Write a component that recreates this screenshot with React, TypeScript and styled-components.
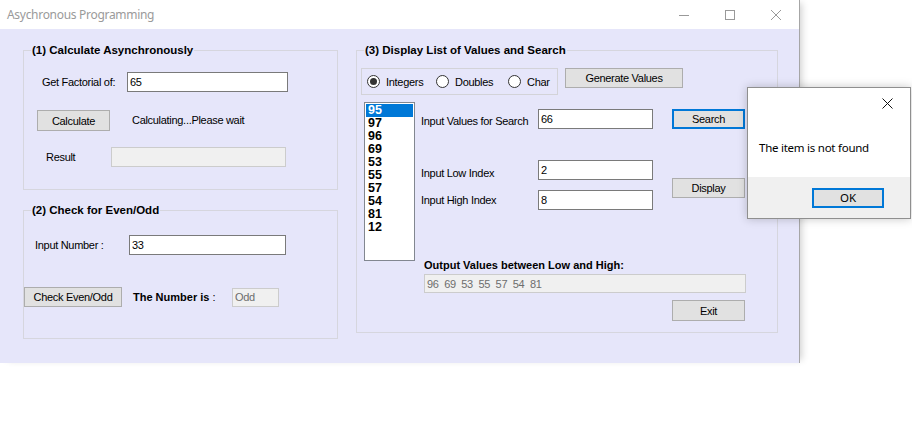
import React from "react";
import styled, { createGlobalStyle } from "styled-components";

const GlobalStyle = createGlobalStyle`
  html, body { margin: 0; padding: 0; background: #ffffff; }
  body { font-family: "Liberation Sans", Arial, sans-serif; }
  * { box-sizing: border-box; }
`;

const Page = styled.div`
  position: relative;
  width: 912px;
  height: 437px;
  overflow: hidden;
  background: #ffffff;
`;

const Window = styled.div`
  width: 800px;
  height: 363px;
  display: flex;
  flex-direction: column;
  border-right: 1px solid #a6a6a6;
  box-shadow: 5px 0 7px -3px rgba(0, 0, 0, 0.18);
`;

const TitleBar = styled.div`
  height: 29px;
  flex: none;
  display: flex;
  align-items: center;
  background: #ffffff;
`;

const TitleText = styled.div`
  flex: 1;
  padding-left: 7px;
  font-family: "Noto Sans", "Open Sans", sans-serif;
  font-size: 12px;
  letter-spacing: -0.3px;
  color: #9a9a9a;
`;

const CaptionButton = styled.div`
  width: 46px;
  height: 29px;
  flex: none;
  display: flex;
  align-items: center;
  justify-content: center;
`;

const Client = styled.div`
  flex: 1;
  background: #e6e6fa;
  display: flex;
  align-items: flex-start;
  gap: 18px;
  padding: 15px 0 0 23px;
`;

const LeftColumn = styled.div`
  display: flex;
  flex-direction: column;
  gap: 14px;
  width: 315px;
`;

const GroupBox = styled.fieldset<{ $w: number; $h: number }>`
  margin: 0;
  padding: 0;
  min-width: 0;
  width: ${(p) => p.$w}px;
  height: ${(p) => p.$h}px;
  border: 1px solid #d6d6de;
`;

const Legend = styled.legend`
  margin-left: 7px;
  padding: 0 1px;
  font-size: 11.5px;
  font-weight: bold;
  line-height: 13px;
  color: #000000;
`;

const Row = styled.div<{ $mt: number; $pl?: number; $top?: boolean }>`
  display: flex;
  align-items: ${(p) => (p.$top ? "flex-start" : "center")};
  margin-top: ${(p) => p.$mt}px;
  padding-left: ${(p) => p.$pl ?? 0}px;
`;

const Label = styled.span<{ $w?: number; $ml?: number; $bold?: boolean; $drop?: number }>`
  flex: none;
  width: ${(p) => (p.$w ? `${p.$w}px` : "auto")};
  margin-left: ${(p) => p.$ml ?? 0}px;
  padding-top: ${(p) => (p.$drop ?? 0) * 2}px;
  font-size: 11px;
  letter-spacing: ${(p) => (p.$bold ? "0" : "-0.3px")};
  font-weight: ${(p) => (p.$bold ? "bold" : "normal")};
  line-height: 13px;
  color: #000000;
  white-space: nowrap;
`;

const Regular = styled.span`
  font-weight: normal;
`;

const TextBox = styled.input<{ $w: number; $h?: number; $ml?: number }>`
  flex: none;
  width: ${(p) => p.$w}px;
  height: ${(p) => p.$h ?? 20}px;
  margin: 0 0 0 ${(p) => p.$ml ?? 0}px;
  padding: 0 2px;
  border: 1px solid #7a7a7a;
  background: #ffffff;
  font-family: "Liberation Sans", Arial, sans-serif;
  font-size: 11px;
  letter-spacing: -0.3px;
  color: #000000;
  outline: none;
  border-radius: 0;

  &:disabled {
    background: #f0f0f0;
    border-color: #cccccc;
    color: #6d6d6d;
    -webkit-text-fill-color: #6d6d6d;
    opacity: 1;
  }
`;

const WinButton = styled.button<{
  $w: number;
  $h?: number;
  $ml?: number;
  $mt?: number;
  $focused?: boolean;
}>`
  flex: none;
  width: ${(p) => p.$w}px;
  height: ${(p) => p.$h ?? 20}px;
  margin: ${(p) => p.$mt ?? 0}px 0 0 ${(p) => p.$ml ?? 0}px;
  padding: 0;
  background: #e1e1e1;
  border: ${(p) => (p.$focused ? "2px solid #0078d7" : "1px solid #adadad")};
  border-radius: 0;
  font-family: "Liberation Sans", Arial, sans-serif;
  font-size: 11px;
  letter-spacing: -0.3px;
  color: #000000;
`;

const RadioPanel = styled.div`
  flex: none;
  width: 197px;
  height: 27px;
  border: 1px solid #d3d3d8;
  display: flex;
  align-items: center;
  padding-left: 5px;
`;

const RadioOption = styled.label<{ $w?: number }>`
  flex: none;
  width: ${(p) => (p.$w ? `${p.$w}px` : "auto")};
  display: flex;
  align-items: center;
  gap: 6px;
  font-size: 11px;
  letter-spacing: -0.3px;
  color: #000000;
`;

const RadioCircle = styled.span<{ $checked?: boolean }>`
  width: 13px;
  height: 13px;
  border-radius: 50%;
  border: 1px solid #333333;
  background: #ffffff;
  display: flex;
  align-items: center;
  justify-content: center;

  &::after {
    content: "";
    width: 7px;
    height: 7px;
    border-radius: 50%;
    background: ${(p) => (p.$checked ? "#333333" : "transparent")};
  }
`;

const ListArea = styled.div`
  display: flex;
  align-items: flex-start;
  margin-top: 7px;
  padding-left: 7px;
`;

const ListBox = styled.div`
  flex: none;
  width: 51px;
  height: 159px;
  background: #ffffff;
  border: 1px solid #828790;
  padding: 1px;
`;

const ListItem = styled.div<{ $selected?: boolean }>`
  height: 13px;
  line-height: 13px;
  padding-left: 2px;
  font-size: 12.5px;
  font-weight: bold;
  background: ${(p) => (p.$selected ? "#0078d7" : "transparent")};
  color: ${(p) => (p.$selected ? "#ffffff" : "#000000")};
`;

const RightArea = styled.div`
  display: flex;
  flex-direction: column;
  align-items: flex-start;
  margin-left: 6px;
`;

const UpperBlock = styled.div`
  display: flex;
  align-items: flex-start;
`;

const FieldsColumn = styled.div`
  display: flex;
  flex-direction: column;
`;

const ButtonsColumn = styled.div`
  display: flex;
  flex-direction: column;
  margin-left: 19px;
`;

const MessageBox = styled.div`
  position: absolute;
  left: 747px;
  top: 87px;
  width: 164px;
  height: 132px;
  background: #ffffff;
  border: 1px solid #8f8f8f;
  box-shadow: 0 0 9px rgba(0, 0, 0, 0.22);
  display: flex;
  flex-direction: column;
  font-family: "Noto Sans", "Open Sans", sans-serif;
`;

const MsgHeader = styled.div`
  height: 30px;
  flex: none;
  display: flex;
  justify-content: flex-end;
`;

const MsgClose = styled.div`
  width: 46px;
  height: 30px;
  display: flex;
  align-items: center;
  justify-content: center;
`;

const MsgBody = styled.div`
  flex: 1;
  display: flex;
  align-items: center;
  padding-left: 11px;
  font-size: 11.5px;
  letter-spacing: -0.25px;
  color: #000000;
`;

const MsgFooter = styled.div`
  height: 41px;
  flex: none;
  background: #f0f0f0;
  display: flex;
  align-items: center;
  justify-content: flex-end;
  padding-right: 26px;
`;

const MsgButton = styled.button`
  width: 72px;
  height: 20px;
  padding: 0;
  background: #e1e1e1;
  border: 2px solid #0078d7;
  border-radius: 0;
  font-family: "Noto Sans", "Open Sans", sans-serif;
  font-size: 11.5px;
  color: #000000;
`;

const values = [95, 97, 96, 69, 53, 55, 57, 54, 81, 12];

export default function App() {
  return (
    <>
      <GlobalStyle />
      <Page>
        <Window>
          <TitleBar>
            <TitleText>Asychronous Programming</TitleText>
            <CaptionButton>
              <svg width="10" height="10" viewBox="0 0 10 10">
                <line x1="0" y1="5.5" x2="10" y2="5.5" stroke="#999" strokeWidth="1" />
              </svg>
            </CaptionButton>
            <CaptionButton>
              <svg width="10" height="10" viewBox="0 0 10 10">
                <rect x="0.5" y="0.5" width="9" height="9" fill="none" stroke="#999" strokeWidth="1" />
              </svg>
            </CaptionButton>
            <CaptionButton>
              <svg width="10" height="10" viewBox="0 0 10 10">
                <path d="M0 0 L10 10 M10 0 L0 10" stroke="#999" strokeWidth="1" />
              </svg>
            </CaptionButton>
          </TitleBar>
          <Client>
            <LeftColumn>
              <GroupBox $w={315} $h={146}>
                <Legend>(1) Calculate Asynchronously</Legend>
                <Row $mt={15} $pl={18}>
                  <Label $w={85}>Get Factorial of:</Label>
                  <TextBox $w={161} defaultValue="65" />
                </Row>
                <Row $mt={18} $pl={13}>
                  <WinButton $w={73} $h={21}>Calculate</WinButton>
                  <Label $ml={22}>Calculating...Please wait</Label>
                </Row>
                <Row $mt={16} $pl={22}>
                  <Label $w={65}>Result</Label>
                  <TextBox $w={175} disabled defaultValue="" />
                </Row>
              </GroupBox>
              <GroupBox $w={315} $h={135}>
                <Legend>(2) Check for Even/Odd</Legend>
                <Row $mt={18} $pl={11}>
                  <Label $w={94}>Input Number :</Label>
                  <TextBox $w={157} defaultValue="33" />
                </Row>
                <Row $mt={32}>
                  <WinButton $w={98}>Check Even/Odd</WinButton>
                  <Label $ml={11} $w={99} $bold>
                    The Number is <Regular>:</Regular>
                  </Label>
                  <TextBox $w={47} $h={19} disabled defaultValue="Odd" />
                </Row>
              </GroupBox>
            </LeftColumn>
            <GroupBox $w={422} $h={289}>
              <Legend>(3) Display List of Values and Search</Legend>
              <Row $mt={11} $pl={4} $top>
                <RadioPanel>
                  <RadioOption $w={69}>
                    <RadioCircle $checked />
                    Integers
                  </RadioOption>
                  <RadioOption $w={72}>
                    <RadioCircle />
                    Doubles
                  </RadioOption>
                  <RadioOption>
                    <RadioCircle />
                    Char
                  </RadioOption>
                </RadioPanel>
                <WinButton $w={118} $ml={7}>Generate Values</WinButton>
              </Row>
              <ListArea>
                <ListBox>
                  {values.map((v, i) => (
                    <ListItem key={i} $selected={i === 0}>
                      {v}
                    </ListItem>
                  ))}
                </ListBox>
                <RightArea>
                  <UpperBlock>
                    <FieldsColumn>
                      <Row $mt={7}>
                        <Label $w={117} $drop={2.5}>Input Values for Search</Label>
                        <TextBox $w={115} defaultValue="66" />
                      </Row>
                      <Row $mt={31}>
                        <Label $w={117} $drop={3.5}>Input Low Index</Label>
                        <TextBox $w={115} defaultValue="2" />
                      </Row>
                      <Row $mt={10}>
                        <Label $w={117}>Input High Index</Label>
                        <TextBox $w={115} defaultValue="8" />
                      </Row>
                    </FieldsColumn>
                    <ButtonsColumn>
                      <WinButton $w={73} $mt={7} $focused>
                        Search
                      </WinButton>
                      <WinButton $w={73} $mt={49}>
                        Display
                      </WinButton>
                    </ButtonsColumn>
                  </UpperBlock>
                  <Row $mt={49} $pl={3}>
                    <Label $bold>Output Values between Low and High:</Label>
                  </Row>
                  <Row $mt={2} $pl={3}>
                    <TextBox $w={322} $h={19} disabled defaultValue="96  69  53  55  57  54  81" />
                  </Row>
                  <WinButton $w={73} $h={21} $mt={7} $ml={251}>
                    Exit
                  </WinButton>
                </RightArea>
              </ListArea>
            </GroupBox>
          </Client>
        </Window>
        <MessageBox>
          <MsgHeader>
            <MsgClose>
              <svg width="11" height="11" viewBox="0 0 11 11">
                <path d="M0.5 0.5 L10.5 10.5 M10.5 0.5 L0.5 10.5" stroke="#111" strokeWidth="1" />
              </svg>
            </MsgClose>
          </MsgHeader>
          <MsgBody>The item is not found</MsgBody>
          <MsgFooter>
            <MsgButton>OK</MsgButton>
          </MsgFooter>
        </MessageBox>
      </Page>
    </>
  );
}
